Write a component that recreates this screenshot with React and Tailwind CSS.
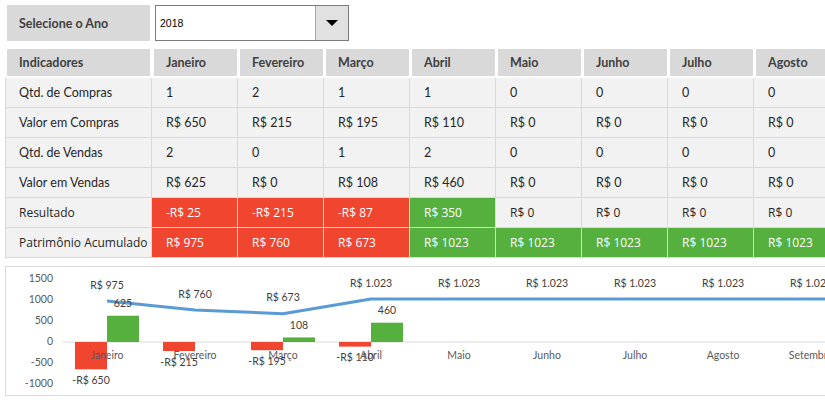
import React from "react";

const months = ["Janeiro", "Fevereiro", "Março", "Abril", "Maio", "Junho", "Julho", "Agosto"];

const RED = "#f0462f";
const GREEN = "#55b03e";

const rows = [
  { label: "Qtd. de Compras", values: ["1", "2", "1", "1", "0", "0", "0", "0"] },
  { label: "Valor em Compras", values: ["R$ 650", "R$ 215", "R$ 195", "R$ 110", "R$ 0", "R$ 0", "R$ 0", "R$ 0"] },
  { label: "Qtd. de Vendas", values: ["2", "0", "1", "2", "0", "0", "0", "0"] },
  { label: "Valor em Vendas", values: ["R$ 625", "R$ 0", "R$ 108", "R$ 460", "R$ 0", "R$ 0", "R$ 0", "R$ 0"] },
  {
    label: "Resultado",
    alt: true,
    values: ["-R$ 25", "-R$ 215", "-R$ 87", "R$ 350", "R$ 0", "R$ 0", "R$ 0", "R$ 0"],
    colors: ["r", "r", "r", "g", null, null, null, null],
  },
  {
    label: "Patrimônio Acumulado",
    alt: true,
    values: ["R$ 975", "R$ 760", "R$ 673", "R$ 1023", "R$ 1023", "R$ 1023", "R$ 1023", "R$ 1023"],
    colors: ["r", "r", "r", "g", "g", "g", "g", "g"],
  },
];

const calibri = { fontFamily: "Lato, 'Liberation Sans', sans-serif" };
const segoe = { fontFamily: "'Open Sans', 'Noto Sans', sans-serif" };

function Chart() {
  const zero = 342;
  const k = 0.042;
  const cats = ["Janeiro", "Fevereiro", "Março", "Abril", "Maio", "Junho", "Julho", "Agosto", "Setembro"];
  const compras = [650, 215, 195, 110, 0, 0, 0, 0, 0];
  const vendas = [625, 0, 108, 460, 0, 0, 0, 0, 0];
  const patr = [975, 760, 673, 1023, 1023, 1023, 1023, 1023, 1023];
  const cx = (i) => 107 + 88 * i;
  const fmt = (v) => (v >= 1000 ? "R$ " + Math.floor(v / 1000) + "." + String(v % 1000).padStart(3, "0") : "R$ " + v);
  const pts = patr.map((p, i) => `${cx(i)},${zero - p * k}`).join(" ") + ` ${cx(9)},${zero - 1023 * k}`;
  const font = "Lato, 'Liberation Sans', sans-serif";
  return (
    <svg width="830" height="128" viewBox="6 267 830 128" className="block">
      <line x1="63" y1={zero} x2="840" y2={zero} stroke="#d9d9d9" strokeWidth="1" />
      {compras.map((v, i) =>
        v > 0 ? <rect key={"r" + i} x={cx(i) - 32} y={zero} width="32" height={v * k} fill={RED} /> : null
      )}
      {vendas.map((v, i) =>
        v > 0 ? <rect key={"g" + i} x={cx(i)} y={zero - v * k} width="32" height={v * k} fill={GREEN} /> : null
      )}
      <polyline points={pts} fill="none" stroke="#5b9bd5" strokeWidth="3" strokeLinejoin="round" />
      <g fontFamily={font} fontSize="10.5" fill="#595959" textAnchor="end" dominantBaseline="middle">
        {[1500, 1000, 500, 0, -500, -1000].map((v) => (
          <text key={v} x="53" y={zero - v * k}>{v}</text>
        ))}
      </g>
      <g fontFamily={font} fontSize="10.5" fill="#595959" textAnchor="middle" dominantBaseline="middle">
        {cats.map((c, i) => (
          <text key={c} x={cx(i)} y="356">{c}</text>
        ))}
      </g>
      <g fontFamily={font} fontSize="10.5" fill="#404040" textAnchor="middle" dominantBaseline="middle">
        {patr.map((p, i) => (
          <text key={"p" + i} x={cx(i)} y={zero - p * k - 15}>{fmt(p)}</text>
        ))}
        {vendas.map((v, i) =>
          v > 0 ? <text key={"vl" + i} x={cx(i) + 16} y={zero - v * k - 11}>{v}</text> : null
        )}
        {compras.map((v, i) =>
          v > 0 ? <text key={"cl" + i} x={cx(i) - 16} y={zero + v * k + 12}>{"-R$ " + v}</text> : null
        )}
      </g>
    </svg>
  );
}

export default function App() {
  return (
    <div className="w-[825px] h-[403px] bg-white overflow-hidden" style={calibri}>
      {/* top selector */}
      <div className="flex pt-[5px] pl-[7px] gap-[5px]">
        <div className="w-[143px] h-[36px] bg-[#d9d9d9] flex items-center pl-[12px] pt-[2px] text-[12.5px] font-bold text-[#404040]">
          Selecione o Ano
        </div>
        <div className="w-[194px] h-[36px] border border-[#7a7a7a] bg-white flex items-stretch">
          <div
            className="flex-1 flex items-center pl-[4px] pt-[1px] text-[10.5px] text-black"
            style={{ fontFamily: "'Liberation Sans', Arial, sans-serif" }}
          >
            2018
          </div>
          <div className="w-[33px] bg-[#e1e1e1] border-l border-[#a8a8a8] flex items-center justify-center">
            <div className="w-0 h-0 border-l-[6px] border-r-[6px] border-t-[6px] border-l-transparent border-r-transparent border-t-black" />
          </div>
        </div>
      </div>

      {/* table */}
      <div className="mt-[6px] pl-[5px] w-max">
        <div className="flex h-[31px] pt-[2px] pb-[2px]">
          <div className="w-[147px] pl-[2px] pr-[2px]">
            <div className="h-full bg-[#d9d9d9] flex items-center pl-[12px] pt-[2px] text-[12.5px] font-bold text-[#404040]">
              Indicadores
            </div>
          </div>
          {months.map((m) => (
            <div key={m} className="w-[86px] pl-[2px] pr-[1px]">
              <div className="h-full bg-[#d9d9d9] flex items-center pl-[12px] pt-[2px] text-[12.5px] font-bold text-[#404040]">
                {m}
              </div>
            </div>
          ))}
        </div>
        <div className="border-l border-[#d9d9d9]">
          {rows.map((r) => (
            <div key={r.label} className="flex h-[30px] border-b border-[#d9d9d9] bg-[#f2f2f2]">
              <div
                className={`w-[146px] border-r border-[#d9d9d9] flex items-center pl-[13px] text-[#262626] whitespace-nowrap ${r.alt ? "" : "pt-[2px]"}`}
                style={r.alt ? { ...segoe, fontSize: "12px" } : { fontSize: "12.5px" }}
              >
                {r.label}
              </div>
              {r.values.map((v, i) => {
                const c = r.colors ? r.colors[i] : null;
                const bg = c === "r" ? "bg-[#f0462f] text-white" : c === "g" ? "bg-[#55b03e] text-white" : "text-[#262626]";
                return (
                  <div
                    key={i}
                    className={`w-[86px] border-r border-[#d9d9d9] flex items-center pl-[14px] whitespace-nowrap ${bg} ${r.alt ? "" : "pt-[2px]"}`}
                    style={r.alt ? { ...segoe, fontSize: "12px" } : { fontSize: "12.5px" }}
                  >
                    {v}
                  </div>
                );
              })}
            </div>
          ))}
        </div>
      </div>

      {/* chart */}
      <div className="mt-[8px] ml-[5px] w-[840px] h-[130px] border border-[#d9d9d9] bg-white">
        <Chart />
      </div>
    </div>
  );
}
